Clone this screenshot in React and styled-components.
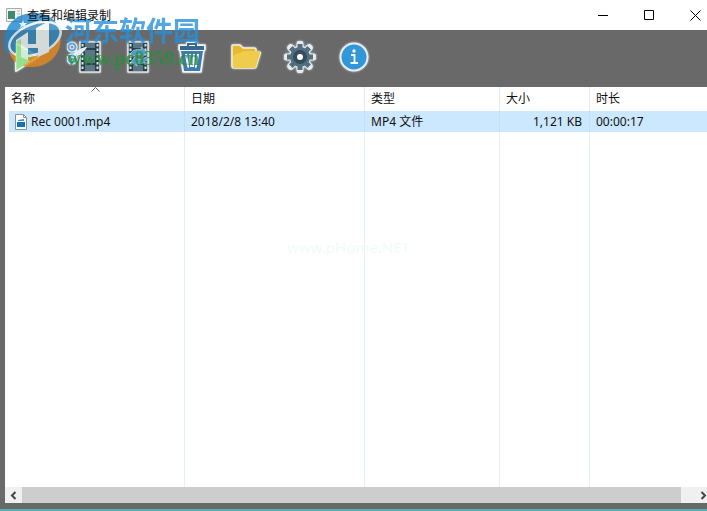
import styled, { createGlobalStyle } from 'styled-components';

const columns = ['名称', '日期', '类型', '大小', '时长'];

const recordings = [
  { name: 'Rec 0001.mp4', date: '2018/2/8 13:40', type: 'MP4 文件', size: '1,121 KB', length: '00:00:17' },
];

export default () => (
  <Window>
    <GlobalStyle />

    {/* TITLE BAR */}
    <TitleBar>
      <AppIcon />
      <Title>查看和编辑录制</Title>
      <Controls>
        <Control aria-label="最小化">
          <svg width="11" height="11"><path d="M0 5.5h10" stroke="#000" /></svg>
        </Control>
        <Control aria-label="最大化">
          <svg width="11" height="11"><path d="M.5 .5h9v9h-9z" fill="none" stroke="#000" /></svg>
        </Control>
        <Control aria-label="关闭">
          <svg width="11" height="11"><path d="M.5 .5l10 10M10.500 .5l-10 10" stroke="#000" /></svg>
        </Control>
      </Controls>
    </TitleBar>

    {/* TOOLBAR */}
    <Toolbar>
      <Tool aria-label="播放"><PlayIcon /></Tool>
      <Tool aria-label="剪切"><CutIcon /></Tool>
      <Tool aria-label="转换"><ConvertIcon /></Tool>
      <Tool aria-label="删除"><TrashIcon /></Tool>
      <Tool aria-label="打开文件夹"><FolderIcon /></Tool>
      <Tool aria-label="设置"><GearIcon /></Tool>
      <Tool aria-label="关于"><InfoIcon /></Tool>
    </Toolbar>

    {/* FILE LIST */}
    <Panel>
      <Table>
        <colgroup>
          <Col $width={180} />
          <Col $width={180} />
          <Col $width={135} />
          <Col $width={90} />
          <col />
        </colgroup>
        <thead>
          <tr>
            {columns.map((label, i) => (
              <Heading key={label} scope="col">
                {label}
                {i === 0 && <SortMark />}
              </Heading>
            ))}
          </tr>
        </thead>
        <tbody>
          {recordings.map(rec => (
            <Row key={rec.name}>
              <NameCell><File><FileIcon />{rec.name}</File></NameCell>
              <Cell>{rec.date}</Cell>
              <Cell>{rec.type}</Cell>
              <Cell $right>{rec.size}</Cell>
              <Cell>{rec.length}</Cell>
            </Row>
          ))}
          <tr>
            {columns.map(label => <Filler key={label} />)}
          </tr>
        </tbody>
      </Table>
      <FaintMark>www.pHome.NET</FaintMark>
      <Scrollbar>
        <ScrollButton aria-label="向左滚动">
          <svg width="7" height="9"><path d="M5.500 1L2 4.500 5.500 8" fill="none" stroke="#444" strokeWidth="2" /></svg>
        </ScrollButton>
        <Thumb />
        <ScrollButton $end aria-label="向右滚动">
          <svg width="7" height="9"><path d="M1.500 1L5 4.500 1.500 8" fill="none" stroke="#444" strokeWidth="2" /></svg>
        </ScrollButton>
      </Scrollbar>
    </Panel>

    {/* WATERMARK */}
    <Watermark>
      <SiteLogo />
      <div>
        <SiteName>河东软件园</SiteName>
        <SiteUrl>www.pc0359.cn</SiteUrl>
      </div>
    </Watermark>
  </Window>
);

const AppIcon = () => (
  <svg width="16" height="14" viewBox="0 0 16 14">
    <path d="M.5 .5h15v13H.5z" fill="#f4f4f4" stroke="#aaa" />
    <path d="M2 3h7v8H2z" fill="#3f8a70" />
    <path d="M11 3h3M11 6h3M11 9h3" stroke="#bbb" />
  </svg>
);

const SortMark = () => (
  <SortSvg width="9" height="5"><path d="M.5 4.500l4-4 4 4" fill="none" stroke="#555" /></SortSvg>
);

const FileIcon = () => (
  <svg width="12" height="16" viewBox="0 0 12 16">
    <path d="M.5 .5h8l3 3v12H.5z" fill="#fff" stroke="#8d9295" />
    <path d="M8.500 .5v3h3" fill="none" stroke="#8d9295" />
    <path d="M2 8h8v5H2z" fill="#1273b5" />
    <path d="M3 6l6-1v2H3z" fill="#2f94cf" />
  </svg>
);

const PlayIcon = () => (
  <svg width="32" height="32" viewBox="0 0 32 32">
    <path d="M2 2v28l22-14z" fill="#62c462" stroke="#e4f5e2" strokeWidth="2" strokeLinejoin="round" />
  </svg>
);

const Film = () => (
  <g>
    <path d="M1 1h20v30H1z" fill="#26404e" stroke="#e3e8ea" strokeWidth="1.500" strokeLinejoin="round" />
    <path d="M6 2h10v5H6zM6 9h10v13H6zM6 24h10v6H6z" fill="#5b7783" />
    <path d="M3.500 3v27M18.500 3v27" stroke="#dce4e7" strokeWidth="2" strokeDasharray="2.500 2" />
  </g>
);

const CutIcon = () => (
  <svg width="34" height="32" viewBox="0 0 34 32">
    <g transform="translate(12 0)"><Film /></g>
    <path d="M8 11c4-1 6-5 12-5-2 4-6 8-11 8z" fill="#e6edf4" />
    <path d="M8 9l4 5M7 14l6-4" stroke="#e6edf4" strokeWidth="3" />
    <circle cx="5" cy="6" r="3.500" fill="#8b9298" stroke="#e6f1fa" strokeWidth="4" />
    <circle cx="5" cy="6" r="3.500" fill="none" stroke="#5ba4de" strokeWidth="2" />
    <circle cx="5" cy="18" r="3.500" fill="#8b9298" stroke="#e6f1fa" strokeWidth="4" />
    <circle cx="5" cy="18" r="3.500" fill="none" stroke="#5ba4de" strokeWidth="2" />
  </svg>
);

const ConvertIcon = () => (
  <svg width="32" height="32" viewBox="0 0 32 32">
    <g transform="translate(5 0)"><Film /></g>
    <path d="M8 16c0-6 6-9 11-7V6l6 5-5 6v-3c-4-1-8 0-12 2zM26 15c0 6-6 9-11 7v3l-6-4 5-6v3c4 1 8 0 12-3z" fill="#4f9bcd" stroke="#b9d3e0" strokeWidth=".7" />
  </svg>
);

const TrashIcon = () => (
  <svg width="32" height="32" viewBox="0 0 32 32">
    <path d="M4 9h24l-3 22H7zM3 4h8V1h10v3h8v5H3z" fill="#fff" stroke="#eef3f6" strokeWidth="1.500" strokeLinejoin="round" />
    <path d="M4 5h7V2h10v3h7v4H4zM13 4v1h6V4z" fill="#3b678a" fillRule="evenodd" />
    <path d="M5 10h22l-3 20H8z" fill="#3d7baf" />
    <path d="M10 13l2 12q0 1 1 1M14 13l1 13M18 13l-1 13M22 13l-2 12q0 1-1 1" fill="none" stroke="#f2f7fa" strokeWidth="2" />
  </svg>
);

const FolderIcon = () => (
  <svg width="32" height="28" viewBox="0 0 32 28">
    <path d="M2 3q0-1 1-1h7l3 3h11q2 0 2 2v2h3q2 0 1 2l-4 13q0 1-2 1H4q-2 0-2-2z" fill="#e8b92c" stroke="#f3efe0" strokeWidth="1.500" strokeLinejoin="round" />
    <path d="M3 25V14q0-2 3-3l4-1q2-2 4-2h15q1 0 1 2l-4 14q-1 1-2 1z" fill="#f0cc4c" />
  </svg>
);

const GearTeeth = () => (
  <path d="M16 3v26M3 16h26M6.800 6.800l18.400 18.400M25.200 6.800L6.800 25.200" />
);

const GearIcon = () => (
  <svg width="32" height="32" viewBox="0 0 32 32">
    <g stroke="#e8ecee" strokeWidth="7" strokeLinecap="round"><GearTeeth /></g>
    <circle cx="16" cy="16" r="11" fill="#e8ecee" />
    <g stroke="#526f80" strokeWidth="5"><GearTeeth /></g>
    <circle cx="16" cy="16" r="10" fill="#526f80" />
    <circle cx="16" cy="16" r="7" fill="#344d5b" />
    <circle cx="16" cy="16" r="3" fill="#fff" />
  </svg>
);

const InfoIcon = () => (
  <svg width="32" height="32" viewBox="0 0 32 32">
    <circle cx="16" cy="16" r="13.500" fill="#3297d9" stroke="#e6eef3" strokeWidth="2" />
    <circle cx="16" cy="10" r="1.700" fill="#fff" />
    <path d="M13 14h3.500v8M12.500 22h7.500" fill="none" stroke="#fff" strokeWidth="1.800" />
  </svg>
);

const SiteLogo = () => (
  <svg width="58" height="60" viewBox="0 0 58 60">
    <path d="M0 30C-1 12 12 1 29 1c14 0 23 7 26 18L30 38 4 43C1 39 0 35 0 30z" fill="#1c86d1" />
    <path d="M4 40c14 5 36 0 51-20 4 18-8 34-27 35C16 56 7 50 4 40z" fill="#e58a1c" />
    <ellipse cx="30" cy="27" rx="27" ry="15" transform="rotate(-22 30 27)" fill="#2f82b8" stroke="#e9f3f8" strokeWidth="2.500" />
    <path d="M11 57V28l12-8v12h8V16l13-7v31l-11 5V36H23v14z" fill="#eef7f4" />
    <path d="M11 58V30l5-3v18l9 4z" fill="#a4e69a" />
    <path d="M18 8l1 3h3l-2 2 1 3-3-2-3 2 1-3-2-2h3z" fill="#dff1fb" />
  </svg>
);

const GlobalStyle = createGlobalStyle`
  body {
    margin: 0;
    font-family: "Noto Sans", "Noto Sans CJK SC", sans-serif;
    font-size: 12px;
    color: #111;
  }

  button {
    padding: 0;
    border: 0;
    background: none;
  }

  svg {
    display: block;
    flex: none;
  }
`;

const Window = styled.div`
  display: flex;
  flex-direction: column;
  position: relative;
  box-sizing: border-box;
  height: 100vh;
  overflow: hidden;
  background: #696969;
  border-bottom: 2px solid #58aeb6;
`;

const TitleBar = styled.header`
  display: flex;
  flex: none;
  align-items: center;
  height: 30px;
  padding-left: 6px;
  background: #fff;
`;

const Title = styled.h1`
  position: relative;
  z-index: 1;
  margin: 0 0 0 5px;
  font-size: 12px;
  font-weight: 400;
`;

const Controls = styled.div`
  display: flex;
  margin-left: auto;
  margin-right: -11px;
`;

const Control = styled.button`
  display: flex;
  align-items: center;
  justify-content: center;
  width: 46px;
  height: 30px;
`;

const Toolbar = styled.nav`
  display: flex;
  flex: none;
  height: 57px;
  padding-left: 3px;
`;

const Tool = styled.button`
  display: flex;
  align-items: center;
  justify-content: center;
  width: 54px;
  height: 54px;

  svg {
    filter: drop-shadow(0 0 1px #cfd5d8);
  }
`;

const Panel = styled.main`
  display: flex;
  flex: 1;
  flex-direction: column;
  position: relative;
  margin: 0 0 6px 5px;
  background: #fff;
`;

const Table = styled.table`
  flex: 1;
  width: 100%;
  table-layout: fixed;
  border-collapse: separate;
  border-spacing: 0;
  line-height: 20px;
`;

const Col = styled.col`
  width: ${props => props.$width}px;
`;

const Heading = styled.th`
  position: relative;
  height: 24px;
  padding: 0 6px;
  border-right: 1px solid #e2ecef;
  font-weight: 400;
  text-align: left;

  &:last-child {
    border-right: 0;
  }
`;

const SortSvg = styled.svg`
  position: absolute;
  top: 0;
  left: calc(50% - 4px);
`;

const Row = styled.tr`
  background: #cce8ff;
`;

const Cell = styled.td`
  height: 21px;
  padding: 0 7px 0 6px;
  border-right: 1px solid #c3dff3;
  text-align: ${props => (props.$right ? 'right' : 'left')};
  white-space: nowrap;

  &:last-child {
    border-right: 0;
  }
`;

const NameCell = styled(Cell)`
  padding-left: 10px;
  background: linear-gradient(to right, #fff 4px, #cce8ff 4px);
`;

const File = styled.span`
  display: flex;
  align-items: center;
  gap: 4px;
`;

const Filler = styled.td`
  padding: 0;
  border-right: 1px solid #e4f1f3;

  &:last-child {
    border-right: 0;
  }
`;

const FaintMark = styled.span`
  position: absolute;
  top: 150px;
  left: 282px;
  font-size: 15px;
  line-height: 20px;
  color: #f2fbfb;
  pointer-events: none;
`;

const Scrollbar = styled.div`
  display: flex;
  flex: none;
  height: 16px;
  background: #f0f0f0;
`;

const ScrollButton = styled.button`
  display: flex;
  flex: none;
  align-items: center;
  justify-content: ${props => (props.$end ? 'flex-end' : 'center')};
  width: ${props => (props.$end ? 26 : 17)}px;
`;

const Thumb = styled.div`
  flex: 1;
  background: #cdcdcd;
`;

const Watermark = styled.aside`
  display: flex;
  gap: 2px;
  position: absolute;
  top: 12px;
  left: 5px;
  opacity: .8;
  pointer-events: none;
`;

const SiteName = styled.div`
  font-family: "Noto Sans CJK SC", sans-serif;
  font-size: 27px;
  font-weight: 700;
  line-height: 36px;
  color: #2890da;
`;

const SiteUrl = styled.div`
  padding-left: 2px;
  font-family: "Liberation Serif", serif;
  font-size: 20px;
  font-weight: 700;
  line-height: 20px;
  color: #249036;
`;
